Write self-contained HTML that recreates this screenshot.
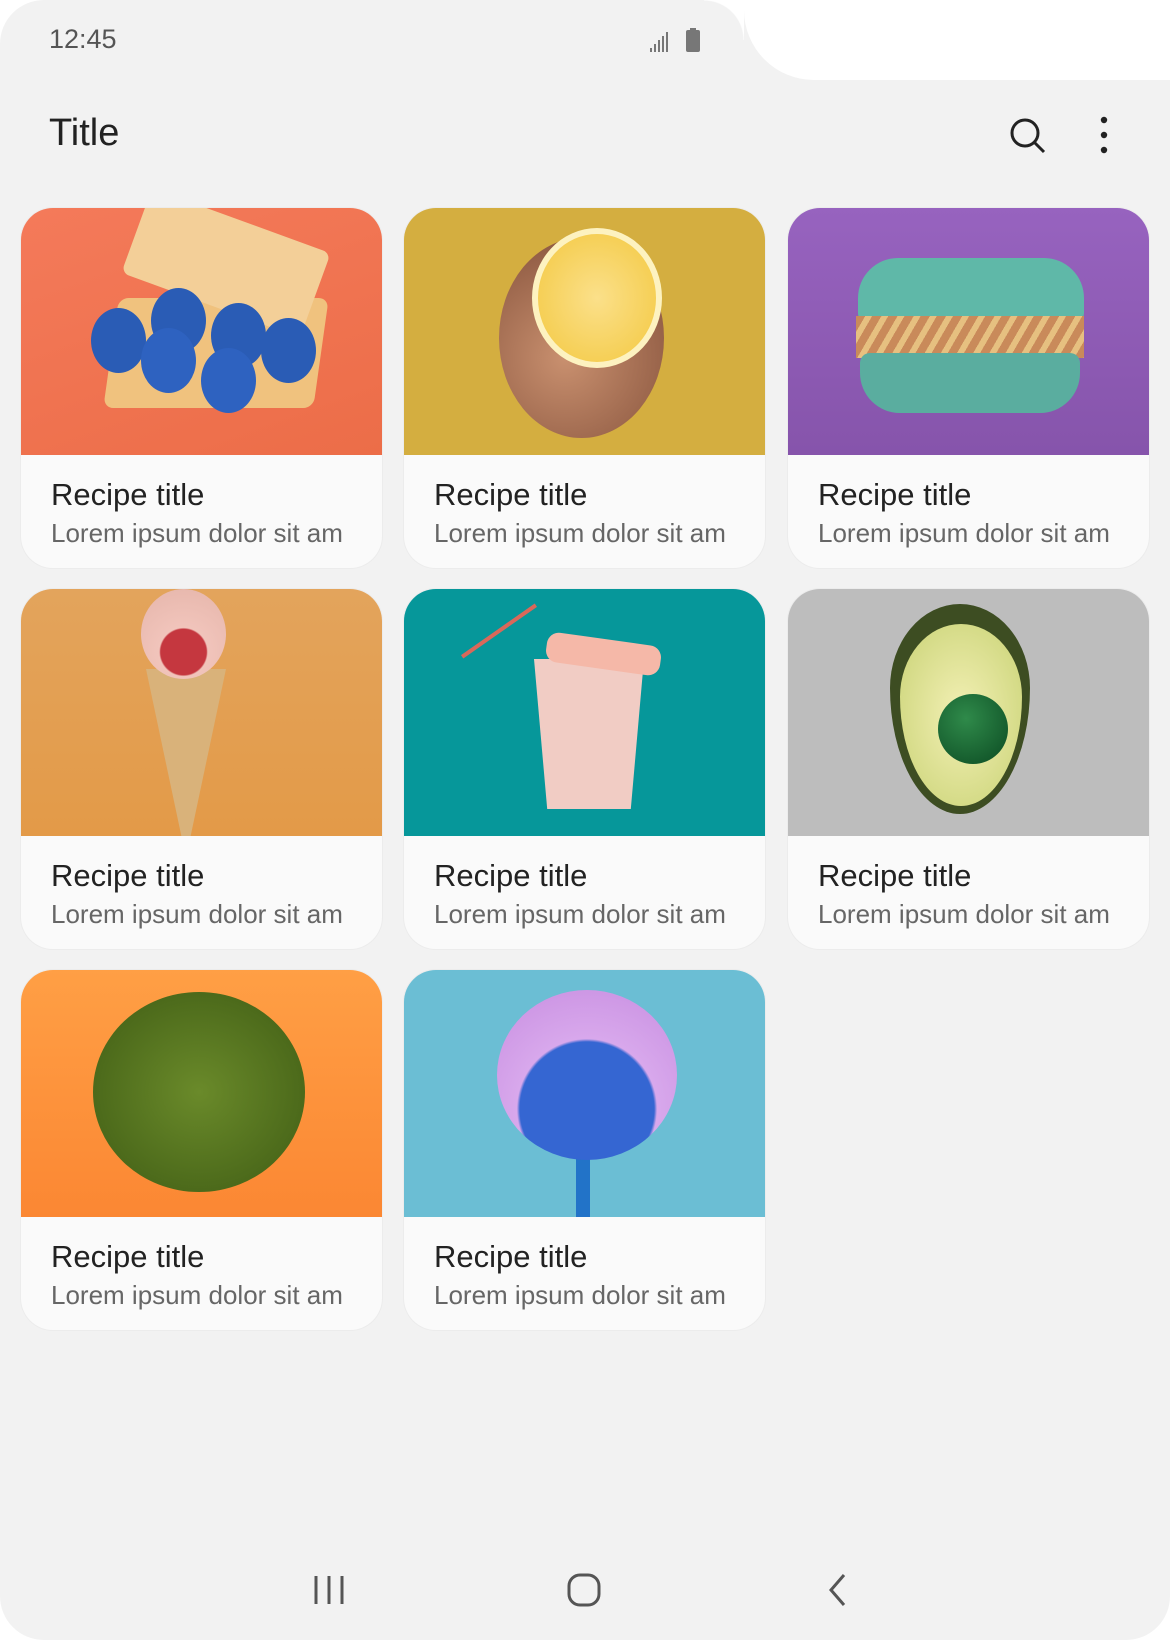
<!DOCTYPE html>
<html><head><meta charset="utf-8"><style>
*{margin:0;padding:0;box-sizing:border-box}
body{width:1170px;height:1640px;background:#fff;font-family:"Liberation Sans",sans-serif;overflow:hidden;position:relative}
.scr{position:absolute;left:0;top:0;width:1170px;height:1640px;background:#f2f2f2;border-radius:44px}
.notch{position:absolute;left:744px;top:0;width:426px;height:80px;background:#fff;border-bottom-left-radius:70px}
.notch:before{content:"";position:absolute;left:-40px;top:0;width:40px;height:40px;background:radial-gradient(circle at 0 100%,transparent 39px,#fff 40px)}
.time{position:absolute;left:49px;top:24px;font-size:27px;color:#555}
.h{position:absolute;left:49px;top:112px;font-size:38px;color:#222}
.card{position:absolute;width:361px;height:360px;border-radius:32px;overflow:hidden;background:#fafafa;box-shadow:0 0 0 1px #ececec}
.img{height:247px;position:relative;overflow:hidden}
.t{position:absolute;left:30px;top:269px;font-size:31px;color:#222}
.s{position:absolute;left:30px;top:310px;font-size:26px;color:#666}
.sh{position:absolute;border-radius:50%}
</style></head><body>
<div class="scr"></div>
<div class="notch"></div>
<div class="time">12:45</div>
<svg style="position:absolute;left:650px;top:28px" width="52" height="26"><g fill="#777"><rect x="0" y="20" width="2" height="4"/><rect x="4" y="16" width="2" height="8"/><rect x="8" y="12" width="2" height="12"/><rect x="12" y="8" width="2" height="16"/><rect x="16" y="4" width="2" height="20"/><rect x="36" y="2" width="14" height="22" rx="2"/><rect x="40" y="0" width="6" height="3"/></g></svg>
<div class="h">Title</div>
<svg style="position:absolute;left:1008px;top:116px" width="40" height="40" fill="none" stroke="#222" stroke-width="3"><circle cx="17" cy="17" r="13"/><line x1="26" y1="26" x2="36" y2="36"/></svg>
<svg style="position:absolute;left:1098px;top:115px" width="12" height="40" fill="#222"><circle cx="6" cy="5" r="3.2"/><circle cx="6" cy="20" r="3.2"/><circle cx="6" cy="35" r="3.2"/></svg>

<div class="card" style="left:21px;top:208px"><div class="img" style="background:linear-gradient(160deg,#f47a5a,#ec6d48)">
<div style="position:absolute;left:90px;top:90px;width:210px;height:110px;background:#f0c27e;border-radius:10px;transform:skewX(-8deg)"></div>
<div style="position:absolute;left:110px;top:10px;width:190px;height:90px;background:#f3cf98;transform:rotate(20deg);border-radius:8px"></div>
<div class="sh" style="left:70px;top:100px;width:55px;height:65px;background:#2a5cb5"></div>
<div class="sh" style="left:130px;top:80px;width:55px;height:65px;background:#2a5cb5"></div>
<div class="sh" style="left:190px;top:95px;width:55px;height:65px;background:#2a5cb5"></div>
<div class="sh" style="left:120px;top:120px;width:55px;height:65px;background:#2e62c0"></div>
<div class="sh" style="left:180px;top:140px;width:55px;height:65px;background:#2e62c0"></div>
<div class="sh" style="left:240px;top:110px;width:55px;height:65px;background:#2a5cb5"></div>
</div><div class="t">Recipe title</div><div class="s">Lorem ipsum dolor sit am</div></div>

<div class="card" style="left:404px;top:208px"><div class="img" style="background:#d4ae40">
<div class="sh" style="left:95px;top:30px;width:165px;height:200px;background:radial-gradient(circle at 40% 60%,#c9906f,#7d4a35)"></div>
<div class="sh" style="left:128px;top:20px;width:130px;height:140px;background:radial-gradient(#fbe08a,#f3c840);border:6px solid #fdf2c0"></div>
</div><div class="t">Recipe title</div><div class="s">Lorem ipsum dolor sit am</div></div>

<div class="card" style="left:788px;top:208px"><div class="img" style="background:linear-gradient(#9763bf,#8654ab)">
<div style="position:absolute;left:70px;top:50px;width:226px;height:65px;background:#5fb8a8;border-radius:40px 40px 10px 10px"></div>
<div style="position:absolute;left:68px;top:108px;width:228px;height:42px;background:repeating-linear-gradient(120deg,#c98a5a 0 8px,#e6c080 8px 14px)"></div>
<div style="position:absolute;left:72px;top:145px;width:220px;height:60px;background:#5aad9f;border-radius:10px 10px 40px 40px"></div>
</div><div class="t">Recipe title</div><div class="s">Lorem ipsum dolor sit am</div></div>

<div class="card" style="left:21px;top:589px"><div class="img" style="background:linear-gradient(#e3a45c,#e39a48)">
<div style="position:absolute;left:125px;top:80px;width:80px;height:170px;background:#d9b27a;clip-path:polygon(0 0,100% 0,55% 100%,45% 100%)"></div>
<div class="sh" style="left:120px;top:0;width:85px;height:90px;background:radial-gradient(circle at 50% 70%,#c5373f 30%,#f1c4bb 32%,#e5b5aa)"></div>
</div><div class="t">Recipe title</div><div class="s">Lorem ipsum dolor sit am</div></div>

<div class="card" style="left:404px;top:589px"><div class="img" style="background:#06979a">
<div style="position:absolute;left:130px;top:70px;width:110px;height:150px;background:#f1ccc4;clip-path:polygon(0 0,100% 0,88% 100%,12% 100%)"></div>
<div style="position:absolute;left:142px;top:50px;width:115px;height:30px;background:#f5b8a8;border-radius:12px;transform:rotate(8deg)"></div>
<div style="position:absolute;left:50px;top:40px;width:90px;height:4px;background:#d9685a;transform:rotate(-35deg)"></div>
</div><div class="t">Recipe title</div><div class="s">Lorem ipsum dolor sit am</div></div>

<div class="card" style="left:788px;top:589px"><div class="img" style="background:#bdbdbd">
<div class="sh" style="left:102px;top:15px;width:140px;height:210px;background:#3d4d22;border-radius:50% 50% 50% 50%/40% 40% 60% 60%"></div>
<div class="sh" style="left:112px;top:35px;width:122px;height:182px;background:radial-gradient(#f3f0b5,#c8d274);border-radius:50%/40% 40% 60% 60%"></div>
<div class="sh" style="left:150px;top:105px;width:70px;height:70px;background:radial-gradient(circle at 40% 35%,#2f8a4a,#0b4a22)"></div>
</div><div class="t">Recipe title</div><div class="s">Lorem ipsum dolor sit am</div></div>

<div class="card" style="left:21px;top:970px"><div class="img" style="background:linear-gradient(#ff9f45,#fb8733)">
<div class="sh" style="left:72px;top:22px;width:212px;height:200px;background:radial-gradient(#6a8a2a,#3f5c14)"></div>
</div><div class="t">Recipe title</div><div class="s">Lorem ipsum dolor sit am</div></div>

<div class="card" style="left:404px;top:970px"><div class="img" style="background:#6bbed4">
<div style="position:absolute;left:172px;top:150px;width:14px;height:100px;background:#2273c8"></div>
<div class="sh" style="left:93px;top:20px;width:180px;height:170px;background:radial-gradient(circle at 50% 70%,#3566d2 45%,#d8a8ec 47%,#c78de0)"></div>
</div><div class="t">Recipe title</div><div class="s">Lorem ipsum dolor sit am</div></div>

<svg style="position:absolute;left:310px;top:1572px" width="40" height="36" stroke="#555" stroke-width="3"><line x1="6" y1="4" x2="6" y2="32"/><line x1="19" y1="4" x2="19" y2="32"/><line x1="32" y1="4" x2="32" y2="32"/></svg>
<svg style="position:absolute;left:566px;top:1572px" width="36" height="36" fill="none" stroke="#555" stroke-width="3"><rect x="3" y="3" width="30" height="30" rx="11"/></svg>
<svg style="position:absolute;left:826px;top:1572px" width="24" height="36" fill="none" stroke="#555" stroke-width="3"><polyline points="18,3 5,18 18,33"/></svg>
</body></html>
